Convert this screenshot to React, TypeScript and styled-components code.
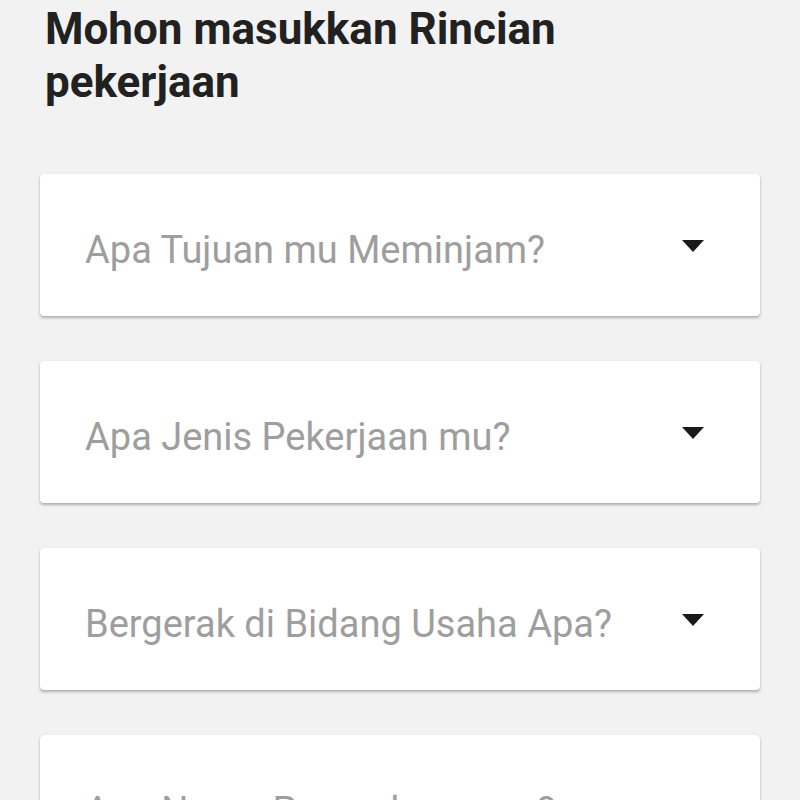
import React from "react";
import styled, { createGlobalStyle } from "styled-components";

const Global = createGlobalStyle`
  html, body { margin: 0; padding: 0; background: #f2f2f2; }
  body { font-family: Roboto, "Liberation Sans", sans-serif; }
`;

const Page = styled.div`
  padding: 3px 40px 0 40px;
  display: flex;
  flex-direction: column;
  height: 800px;
  overflow: hidden;
  box-sizing: border-box;
`;

const Title = styled.h1`
  margin: 0 0 0 5px;
  font-size: 44px;
  line-height: 53px;
  font-weight: 700;
  color: #212121;
  width: 600px;
`;

const List = styled.div`
  margin-top: 65px;
  display: flex;
  flex-direction: column;
  gap: 45px;
`;

const Card = styled.div`
  background: #fff;
  border-radius: 4px;
  height: 142px;
  box-shadow: 0 2px 3px rgba(0, 0, 0, 0.28), 0 0 1px rgba(0, 0, 0, 0.12);
  display: flex;
  align-items: center;
  padding: 10px 56px 0 45px;
  box-sizing: border-box;
  flex-shrink: 0;
`;

const Label = styled.span`
  flex: 1;
  font-size: 38px;
  color: #9e9e9e;
  white-space: nowrap;
`;

const Arrow = styled.svg`
  width: 22px;
  height: 12px;
  margin-top: -8px;
  flex-shrink: 0;
`;

const items = [
  "Apa Tujuan mu Meminjam?",
  "Apa Jenis Pekerjaan mu?",
  "Bergerak di Bidang Usaha Apa?",
  "Apa Nama Perusahaan mu?",
];

export default function App() {
  return (
    <>
      <Global />
      <Page>
        <Title>Mohon masukkan Rincian pekerjaan</Title>
        <List>
          {items.map((t, i) => (
            <Card key={t}>
              <Label>{t}</Label>
              {i < 3 && (
                <Arrow viewBox="0 0 22 12">
                  <path d="M0 0 H22 L11 12 Z" fill="#1a1a1a" />
                </Arrow>
              )}
            </Card>
          ))}
        </List>
      </Page>
    </>
  );
}
